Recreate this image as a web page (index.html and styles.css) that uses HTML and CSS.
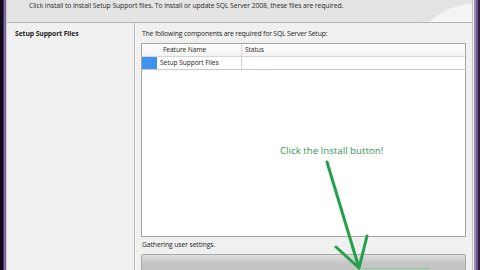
FILE: index.html
```html
<!DOCTYPE html>
<html lang="en">
<head>
    <meta charset="UTF-8">
    <title>Setup Support Files</title>
    <link rel="stylesheet" href="styles.css">
</head>
<body>
    <div id="screen">
        <div class="edge-left"></div>
        <div id="window">
            <div id="banner">
                <p class="banner-text">Click Install to install Setup Support files. To install or update SQL Server 2008, these files are required.</p>
            </div>
            <div id="main">
                <div id="sidebar">
                    <p class="step">Setup Support Files</p>
                </div>
                <div id="content">
                    <p class="intro">The following components are required for SQL Server Setup:</p>
                    <div id="grid">
                        <div class="grid-row grid-head">
                            <div class="cell cell-mark"></div>
                            <div class="cell cell-name">Feature Name</div>
                            <div class="cell cell-status">Status</div>
                        </div>
                        <div class="grid-row">
                            <div class="cell cell-mark selected"></div>
                            <div class="cell cell-name">Setup Support Files</div>
                            <div class="cell cell-status"></div>
                        </div>
                    </div>
                    <p class="progress-label">Gathering user settings.</p>
                    <div class="progress"></div>
                </div>
            </div>
        </div>
        <div class="edge-right"></div>

        <div class="note">Click the Install button!</div>
        <svg class="arrow" width="480" height="270" viewBox="0 0 480 270">
            <g fill="none" stroke="#25a04a" stroke-width="3" stroke-linecap="round" stroke-linejoin="round">
                <path d="M327 162 L359 268"/>
                <path d="M336 247 L359 268 L367 236"/>
            </g>
            <path d="M360 268.5 L430 268.5" stroke="#7fcf95" stroke-width="1"/>
        </svg>
    </div>
</body>
</html>
```

FILE: styles.css
```css
body {
    margin: 0;
    font-family: "Open Sans", "Noto Sans", sans-serif;
    color: #1e1e1e;
}
p {
    margin: 0;
}
#screen {
    position: relative;
    width: 480px;
    height: 270px;
    overflow: hidden;
    display: flex;
}
.edge-left {
    width: 7px;
    background: linear-gradient(to right, #120a18 0 3px, #4a3a64 3px 4px, #7a6898 4px 6px, #cfcad6 6px);
}
.edge-right {
    width: 8px;
    background: linear-gradient(to right, #c4c0cc 0 1px, #f2f2f2 1px 2px, #9a8cb8 2px 4px, #6a5888 4px 6px, #2a1e3a 6px);
}
#window {
    flex: 1;
    display: flex;
    flex-direction: column;
    background: #f0f0f0;
    overflow: hidden;
}
#banner {
    height: 22px;
    flex-shrink: 0;
    border-bottom: 1px solid #b4b4b4;
    background:
        radial-gradient(ellipse 90px 60px at 470px 40px, #f4f4f4 0 60%, transparent 61%),
        radial-gradient(ellipse 110px 70px at 460px 50px, #e2e2e2 0 60%, transparent 61%),
        #e4e4e4;
}
.banner-text {
    padding: 1px 0 0 22px;
    font-size: 6.8px;
    letter-spacing: -0.08px;
    line-height: 10px;
    color: #2a2a2a;
}
#main {
    flex: 1;
    display: flex;
    min-height: 0;
}
#sidebar {
    width: 127px;
    border-right: 1px solid #bdbdbd;
    box-shadow: 1px 0 0 #fafafa;
}
.step {
    padding: 6px 0 0 8px;
    font-size: 6.8px;
    letter-spacing: -0.1px;
    font-weight: bold;
    line-height: 10px;
}
#content {
    flex: 1;
    padding: 6px 6px 0 6px;
    display: flex;
    flex-direction: column;
}
#content > * {
    flex-shrink: 0;
}
.intro {
    font-size: 6.8px;
    letter-spacing: -0.15px;
    line-height: 10px;
    padding-left: 1px;
}
#grid {
    margin-top: 4px;
    height: 192px;
    background: #fff;
    border: 1px solid #a5a5a5;
}
.grid-row {
    display: flex;
    height: 12px;
    border-bottom: 1px solid #c8c8c8;
    font-size: 6.6px;
    letter-spacing: -0.05px;
    line-height: 12px;
}
.grid-head {
    background: linear-gradient(#ffffff, #f3f3f3);
    border-bottom: 1px solid #d6d6d6;
}
.cell {
    padding-left: 3px;
    white-space: nowrap;
}
.cell-mark {
    width: 12px;
}
.selected {
    background: #3f93f0;
}
.cell-name {
    width: 81px;
    border-right: 1px solid #d4d4d4;
}
.grid-head .cell-name {
    padding-left: 6px;
    width: 78px;
    border-right: 1px solid #dcdcdc;
}
.progress-label {
    margin-top: 3px;
    font-size: 6.8px;
    letter-spacing: -0.1px;
    line-height: 10px;
    padding-left: 1px;
}
.progress {
    margin-top: 4px;
    height: 20px;
    border: 1px solid #a8a8a8;
    border-radius: 2px;
    background: linear-gradient(#dedede, #c6c6c6 40%, #c4c4c4);
}
.note {
    position: absolute;
    left: 280px;
    top: 144px;
    font-size: 9.7px;
    line-height: 14px;
    color: #2f9a55;
}
.arrow {
    position: absolute;
    left: 0;
    top: 0;
}
```
